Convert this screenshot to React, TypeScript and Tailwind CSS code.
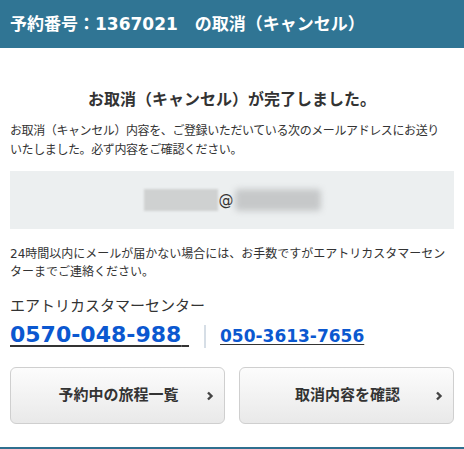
import React from "react";

const font = { fontFamily: '"DejaVu Sans", "Noto Sans CJK JP", sans-serif' };

function Chevron() {
  return (
    <svg width="8" height="10" viewBox="0 0 8 10" className="shrink-0">
      <path d="M2 1.5 L5.5 5 L2 8.5" fill="none" stroke="#444" strokeWidth="2.4" />
    </svg>
  );
}

export default function App() {
  return (
    <div className="w-[464px] h-[449px] bg-white text-[#333] overflow-hidden flex flex-col" style={font}>
      <div className="h-[48px] bg-[#307594] flex items-center px-[10px]">
        <h1 className="text-white font-bold text-[17px] leading-none whitespace-nowrap">
          予約番号：1367021　の取消（キャンセル）
        </h1>
      </div>

      <div className="px-[10px] flex flex-col flex-1">
        <h2 className="mt-[40px] text-center font-bold text-[16px] leading-[24px] whitespace-nowrap">
          お取消（キャンセル）が完了しました。
        </h2>
        <p className="mt-[10px] text-[12px] leading-[19px] tracking-[-0.4px] whitespace-nowrap">
          お取消（キャンセル）内容を、ご登録いただいている次のメールアドレスにお送り
          <br />
          いたしました。必ず内容をご確認ください。
        </p>

        <div className="mt-[11px] h-[58px] bg-[#eceff0] flex items-center justify-center">
          <div className="flex items-center">
            <div className="w-[74px] h-[22px] bg-[#cfd1d1] blur-[0.8px]" />
            <span className="text-[15px] leading-none text-[#333] px-[1px]">@</span>
            <div className="w-[86px] h-[22px] bg-[#c6c8c9] blur-[3px] rounded-sm" />
          </div>
        </div>

        <p className="mt-[16px] text-[12px] leading-[18px] whitespace-nowrap">
          24時間以内にメールが届かない場合には、お手数ですがエアトリカスタマーセン
          <br />
          ターまでご連絡ください。
        </p>

        <div className="mt-[15px] text-[15px] leading-[20px]">エアトリカスタマーセンター</div>

        <div className="mt-[3px] flex items-end h-[30px]">
          <a className="text-[22px] leading-[28px] font-bold text-[#0b58d0] underline decoration-[#333] decoration-2 underline-offset-[3px] whitespace-pre">
            0570-048-988{" "}
          </a>
          <div className="ml-[15px] mr-[14px] w-[2px] h-[23px] bg-[#d6dee6] mb-[1px]" />
          <a className="text-[17px] leading-[24px] font-bold text-[#0b58d0] underline decoration-[#333] underline-offset-[2px] mb-[1px]">
            050-3613-7656
          </a>
        </div>

        <div className="mt-[18px] grid grid-cols-2 gap-[14px]">
          <button className="h-[57px] rounded-[6px] border border-[#cfcfcf] bg-gradient-to-b from-[#fcfcfc] to-[#e9e9e9] flex items-center pl-[20px] pr-[10px]">
            <span className="flex-1 text-center font-bold text-[15px] text-[#333]">予約中の旅程一覧</span>
            <Chevron />
          </button>
          <button className="h-[57px] rounded-[6px] border border-[#cfcfcf] bg-gradient-to-b from-[#fcfcfc] to-[#e9e9e9] flex items-center pl-[20px] pr-[10px]">
            <span className="flex-1 text-center font-bold text-[15px] text-[#333]">取消内容を確認</span>
            <Chevron />
          </button>
        </div>
      </div>
      <div className="h-[2px] bg-[#2f6f8f]" />
    </div>
  );
}
